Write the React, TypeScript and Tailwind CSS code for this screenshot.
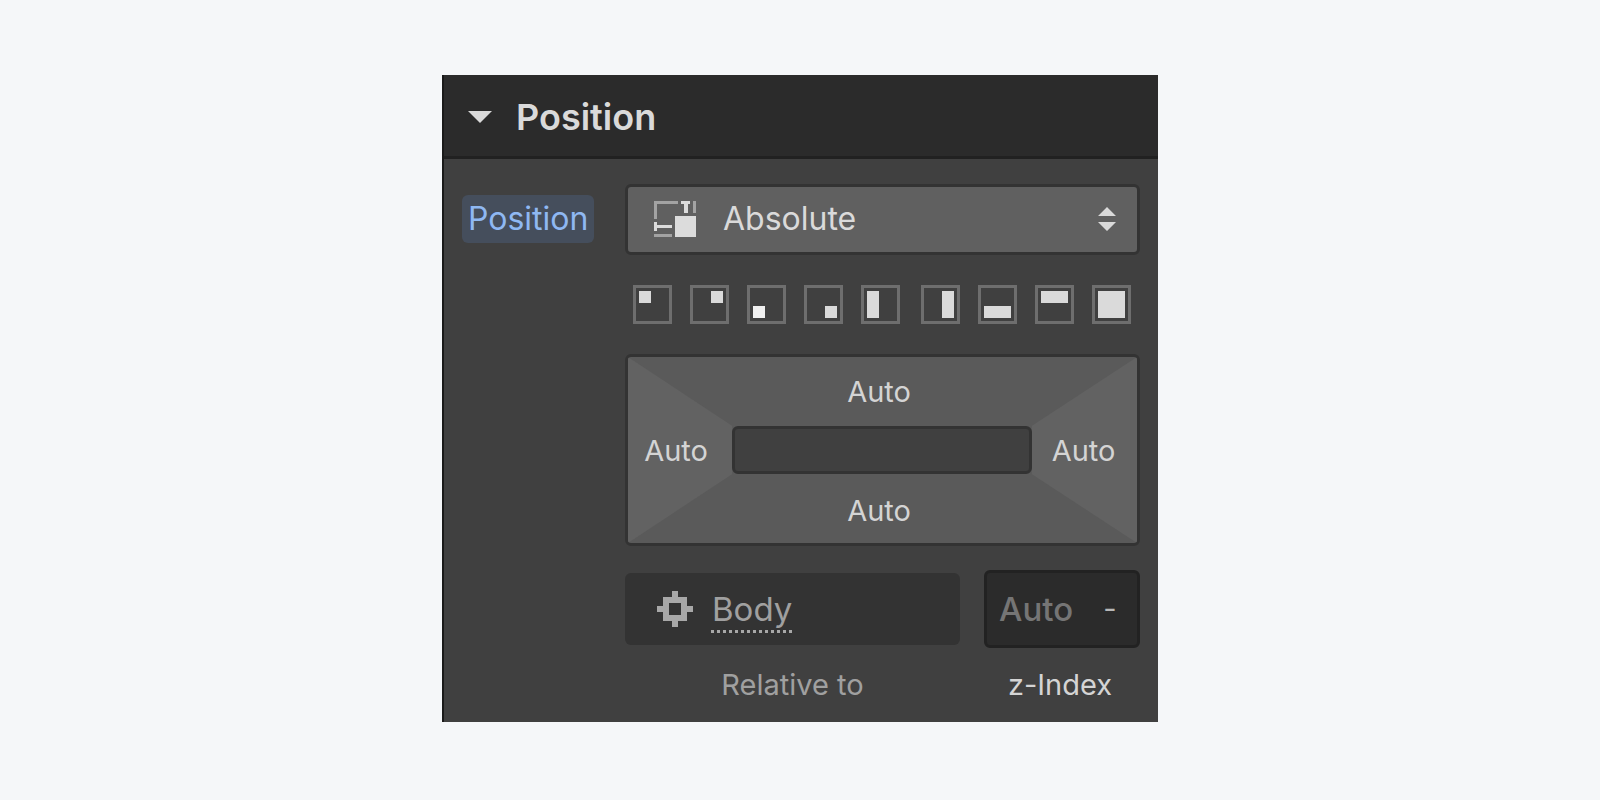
import { useState } from "react";
import clsx from "clsx";

const presets = [
  { name: "Top left", fill: "self-start justify-self-start w-3 h-3" },
  { name: "Top right", fill: "self-start justify-self-end w-3 h-3" },
  { name: "Bottom left", fill: "self-end justify-self-start w-3 h-3 bg-[#f0f0f0]" },
  { name: "Bottom right", fill: "self-end justify-self-end w-3 h-3" },
  { name: "Left", fill: "justify-self-start w-3 h-full" },
  { name: "Right", fill: "justify-self-end w-3 h-full" },
  { name: "Bottom", fill: "self-end w-full h-3" },
  { name: "Top", fill: "self-start w-full h-3" },
  { name: "Full", fill: "w-full h-full" },
];

const AbsoluteIcon = () => (
  <svg
    width="42"
    height="36"
    viewBox="0 0 42 36"
    shapeRendering="crispEdges"
    aria-hidden="true"
    className="pointer-events-none absolute left-[29px] top-[17px]"
  >
    <path fill="#a3a3a3" d="M0 0h24v3H3v15H0zM39 0h3v12h-3zM0 33h18v3H0z" />
    <path
      fill="#dcdcdc"
      d="M27 0h9v3h-2v9h-4V3h-3zM0 21h3v3h15v3H3v3H0zM21 15h21v21H21z"
    />
  </svg>
);

const SelectArrows = () => (
  <svg
    width="18"
    height="24"
    viewBox="0 0 18 24"
    fill="#dadada"
    aria-hidden="true"
    className="pointer-events-none absolute right-6 top-[23px]"
  >
    <path d="M9 0l9 9H0zM0 15h18l-9 9z" />
  </svg>
);

const TargetIcon = () => (
  <svg
    width="36"
    height="36"
    viewBox="0 0 36 36"
    fill="#a8a8a8"
    fillRule="evenodd"
    shapeRendering="crispEdges"
    aria-hidden="true"
  >
    <path d="M15 0h6v6h9v9h6v6h-6v9h-9v6h-6v-6H6v-9H0v-6h6V6h9zM12 12v12h12V12z" />
  </svg>
);

const PresetRow = () => (
  <div className="flex gap-[18px] px-2">
    {presets.map(({ name, fill }) => (
      <button
        key={name}
        type="button"
        aria-label={name}
        className={clsx(
          "grid size-[39px] border-3 border-[#6e6e6e] p-[3px]",
          name === "Right" && "ml-[3px]"
        )}
      >
        <span className={clsx("block", !fill.includes("bg-") && "bg-[#dadada]", fill)} />
      </button>
    ))}
  </div>
);

const OffsetBox = () => (
  <div className="grid grid-cols-[104px_1fr_105px] grid-rows-[69px_48px_69px] overflow-hidden rounded-md border-3 border-[#333333] bg-[#5a5a5a] text-[29px] leading-9 text-[#d4d4d4]">
    <button
      type="button"
      aria-label="Left offset"
      className="col-start-1 row-span-3 row-start-1 bg-[#626262] pt-0.5 pr-2 [clip-path:polygon(0_0,100%_37%,100%_63%,0_100%)]"
    >
      Auto
    </button>
    <button type="button" aria-label="Top offset" className="col-start-2 row-start-1 pr-1.5">
      Auto
    </button>
    <div className="col-start-2 row-start-2 rounded-md border-3 border-[#333333] bg-[#404040]" />
    <button type="button" aria-label="Bottom offset" className="col-start-2 row-start-3 pt-1 pr-1.5">
      Auto
    </button>
    <button
      type="button"
      aria-label="Right offset"
      className="col-start-3 row-span-3 row-start-1 bg-[#626262] pt-0.5 pr-0.5 [clip-path:polygon(100%_0,0_37%,0_63%,100%_100%)]"
    >
      Auto
    </button>
  </div>
);

const App = () => {
  const [position, setPosition] = useState("absolute");
  const [zIndex, setZIndex] = useState("");

  return (
    <main className="flex min-h-screen items-start justify-center bg-[#f5f7f9] py-[75px] font-['Inter',sans-serif]">
      <section className="w-full max-w-[716px] border-l-2 border-[#1a1a1a] bg-[#404040]">
        <h2 className="border-b-3 border-[#212121] bg-[#2b2b2b]">
          <button
            type="button"
            aria-expanded="true"
            className="flex h-[81px] w-full items-center gap-6 pt-0.5 pl-6 text-[36px] leading-10 font-semibold text-[#dadada]"
          >
            <svg width="24" height="13" viewBox="0 0 24 13" fill="currentColor" aria-hidden="true">
              <path d="M0 1h24L12 13z" />
            </svg>
            Position
          </button>
        </h2>

        <div className="grid grid-cols-[163px_1fr] px-[18px] pt-[25px] pb-[22px]">
          <label
            htmlFor="position"
            className="mt-[11px] self-start justify-self-start rounded-md bg-[#454e5c] px-1.5 text-[32px] leading-12 text-[#8fb8f2]"
          >
            Position
          </label>

          <div className="flex flex-col gap-[30px]">
            <div className="relative">
              <select
                id="position"
                value={position}
                onChange={(e) => setPosition(e.target.value)}
                className="block h-[71px] w-full appearance-none rounded-md border-3 border-[#333333] bg-[#606060] pb-0.5 pl-[95px] text-[32px] leading-12 text-[#dadada]"
              >
                <option value="static">Static</option>
                <option value="relative">Relative</option>
                <option value="absolute">Absolute</option>
                <option value="fixed">Fixed</option>
                <option value="sticky">Sticky</option>
              </select>
              <AbsoluteIcon />
              <SelectArrows />
            </div>

            <PresetRow />
            <OffsetBox />
          </div>

          <div className="col-start-2 mt-6 grid grid-cols-[1fr_156px] items-center gap-x-6 gap-y-[22px]">
            <button
              type="button"
              aria-describedby="relative-to"
              className="flex h-[72px] items-center gap-[18px] rounded-md bg-[#333333] pl-8 text-[33px] leading-12 text-[#a0a0a0]"
            >
              <TargetIcon />
              <span className="bg-[repeating-linear-gradient(90deg,#a8a8a8_0_3px,transparent_3px_6px)] bg-[length:100%_3px] bg-bottom bg-no-repeat px-px">
                Body
              </span>
            </button>
            <div className="flex h-[78px] items-center rounded-md border-3 border-[#222222] bg-[#2b2b2b] pl-3 text-[33px] leading-12">
              <input
                id="z-index"
                value={zIndex}
                placeholder="Auto"
                onChange={(e) => setZIndex(e.target.value)}
                className="w-full min-w-0 flex-1 bg-transparent font-medium text-[#dadada] outline-none placeholder:text-[#757575]"
              />
              <button type="button" aria-label="Unit" className="w-[54px] text-[29px] text-[#b8b8b8]">
                -
              </button>
            </div>
            <span id="relative-to" className="text-center text-[29px] leading-[30px] text-[#a0a0a0]">
              Relative to
            </span>
            <label
              htmlFor="z-index"
              className="pr-1 text-center text-[29px] leading-[30px] text-[#d4d4d4]"
            >
              z-Index
            </label>
          </div>
        </div>
      </section>
    </main>
  );
};

export default App;
